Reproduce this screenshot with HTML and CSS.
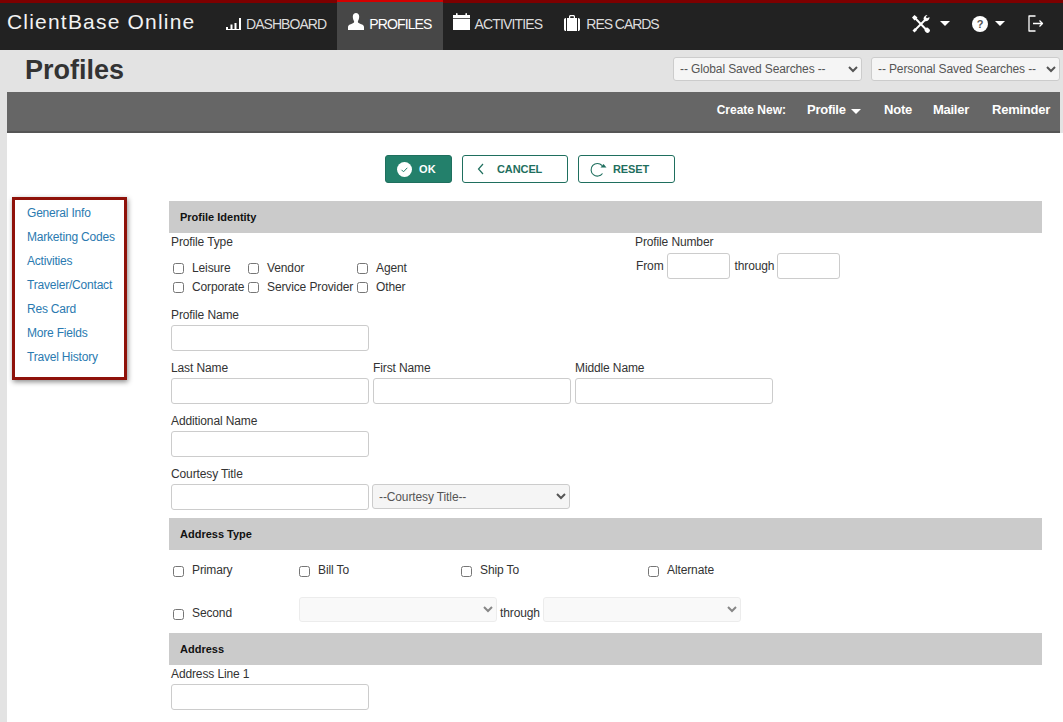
FILE: index.html

```html
<!DOCTYPE html>
<html lang="en">
<head>
  <meta charset="UTF-8" />
  <meta name="viewport" content="width=device-width, initial-scale=1.0"/>
  <title>ClientBase Online - Profiles</title>
  <link rel="stylesheet" href="styles.css">
</head>
<body>

<header class="topbar">
  <div class="brand">ClientBase Online</div>
  <nav class="mainnav">
    <a class="navlink nav-dash" href="#">
      <svg class="navicon" width="16" height="12" viewBox="0 0 16 12"><path fill="#fff" d="M0 9h2v3H0zM4.500 6.500h2V12h-2zM8.500 5h2v7h-2zM13 0h2v12h-2zM0 11h15v1H0z"/></svg>
      DASHBOARD
    </a>
    <a class="navlink nav-profiles active" href="#">
      <svg class="navicon tall" width="16" height="17" viewBox="0 0 16 17"><path fill="#fff" d="M4.800 3.500C4.800 1.300 6.200 0 8 0s3.200 1.300 3.200 3.500c0 2-.7 3.500-1.200 4.500-.3.600-.2 1.300.3 1.700 1 .8 2.600 1.300 3.900 1.900.9.400 1.800 1.400 1.800 2.600V17H0v-2.800c0-1.200.9-2.200 1.800-2.600 1.300-.6 2.900-1.100 3.900-1.900.5-.4.6-1.100.3-1.700-.5-1-1.200-2.500-1.200-4.500z"/></svg>
      PROFILES
    </a>
    <a class="navlink nav-act" href="#">
      <svg class="navicon tall" width="17" height="17" viewBox="0 0 17 17"><path fill="#fff" d="M0 2h3V.8C3 .3 3.300 0 3.800 0s.8.3.8.8V2h7.800V.8c0-.5.3-.8.8-.8s.8.3.8.8V2h3v3H0zM0 5.800h17V17H0z"/></svg>
      ACTIVITIES
    </a>
    <a class="navlink nav-res" href="#">
      <svg class="navicon mid" width="16" height="16" viewBox="0 0 16 16"><path fill="#fff" d="M5 3V1.500C5 .7 5.700 0 6.500 0h3c.8 0 1.500.7 1.500 1.500V3H9.800V1.700c0-.3-.2-.5-.5-.5H6.700c-.3 0-.5.2-.5.5V3zM3 3h10v13H3zM2 3v13h-.2C.8 16 0 15.200 0 14.200V4.800C0 3.800.8 3 1.800 3zM14 3h.2c1 0 1.800.8 1.800 1.800v9.400c0 1-.8 1.800-1.800 1.800H14z"/></svg>
      RES CARDS
    </a>
  </nav>
  <div class="toolnav">
    <svg class="tool-icon" width="18" height="18" viewBox="0 0 18 18"><path fill="none" stroke="#fff" stroke-width="2" d="M3 15L14 4"/><path fill="none" stroke="#fff" stroke-width="2" d="M3.500 3.500L15 15.500"/><path fill="#fff" d="M0 2.500L2.500 0l3 2.500-3 3zM11.500 4C11.500 1.800 13.300 0 15.500 0l-1.800 2 1.300 1.300L17.500 2c.2 2.500-1.700 4.500-4.500 4.200zM12.500 15c0-.8 1.500-2.500 2.500-2.500s3 2 3 3-1.500 2.500-2.500 2.500-3-2-3-3zM.5 15.500l2.500-2.500 2 2-2.500 2.500z"/></svg>
    <span class="caret tool-caret"></span>
    <span class="help-icon">?</span>
    <span class="caret help-caret"></span>
    <svg class="logout-icon" width="16" height="17" viewBox="0 0 16 17"><path fill="none" stroke="#fff" stroke-width="1.300" stroke-linejoin="round" d="M7.500 1H1v15h6.500M5 8.500h9.500M11.500 5.500l3 3-3 3"/></svg>
  </div>
</header>

<div class="subheader">
  <h1>Profiles</h1>
  <div class="saved">
    <select class="saved-global"><option>-- Global Saved Searches --</option></select>
    <select class="saved-personal"><option>-- Personal Saved Searches --</option></select>
  </div>
</div>

<div class="createbar">
  <span class="create-label">Create New:</span>
  <a href="#" class="create-profile">Profile <span class="caret small"></span></a>
  <a href="#" class="create-note">Note</a>
  <a href="#" class="create-mailer">Mailer</a>
  <a href="#">Reminder</a>
</div>

<div class="content">
  <div class="actions">
    <button class="btn btn-ok">
      <svg width="15" height="15" viewBox="0 0 15 15"><circle cx="7.500" cy="7.500" r="7.500" fill="#fff"/><path d="M4.500 7.800l2 2 3.800-4" fill="none" stroke="#23806b" stroke-width="1"/></svg>
      OK
    </button>
    <button class="btn btn-cancel">
      <svg width="8" height="12" viewBox="0 0 8 12"><path d="M6 1L1.500 6 6 11" fill="none" stroke="#1f6f5e" stroke-width="1.200"/></svg>
      CANCEL
    </button>
    <button class="btn btn-reset">
      <svg width="17" height="15" viewBox="0 0 17 15"><path d="M12.500 11.500A6.300 6.300 0 1 1 12 3.500" fill="none" stroke="#1f6f5e" stroke-width="1.100"/><path d="M10.500 5.500h6l-3-3.500z" fill="#1f6f5e"/></svg>
      RESET
    </button>
  </div>

  <div class="columns">
    <aside class="sidebox">
      <a href="#">General Info</a>
      <a href="#">Marketing Codes</a>
      <a href="#">Activities</a>
      <a href="#">Traveler/Contact</a>
      <a href="#">Res Card</a>
      <a href="#">More Fields</a>
      <a href="#">Travel History</a>
    </aside>

    <form class="search">
      <h3 class="section">Profile Identity</h3>

      <div class="identity">
        <div class="type-col">
          <div class="lbl">Profile Type</div>
          <div class="checks">
            <label><input type="checkbox"> Leisure</label>
            <label><input type="checkbox"> Vendor</label>
            <label><input type="checkbox"> Agent</label>
            <label><input type="checkbox"> Corporate</label>
            <label><input type="checkbox"> Service Provider</label>
            <label><input type="checkbox"> Other</label>
          </div>
        </div>
        <div class="number-col">
          <div class="lbl">Profile Number</div>
          <div class="range">
            <span>From</span><input type="text" class="short">
            <span>through</span><input type="text" class="short">
          </div>
        </div>
      </div>

      <div class="field first-name-row">
        <div class="lbl">Profile Name</div>
        <input type="text" class="wide">
      </div>

      <div class="name-row">
        <div class="field">
          <div class="lbl">Last Name</div>
          <input type="text" class="wide">
        </div>
        <div class="field">
          <div class="lbl">First Name</div>
          <input type="text" class="wide">
        </div>
        <div class="field">
          <div class="lbl">Middle Name</div>
          <input type="text" class="wide">
        </div>
      </div>

      <div class="field">
        <div class="lbl">Additional Name</div>
        <input type="text" class="wide">
      </div>

      <div class="field">
        <div class="lbl">Courtesy Title</div>
        <div class="title-row">
          <input type="text" class="wide">
          <select class="pick"><option>--Courtesy Title--</option></select>
        </div>
      </div>

      <h3 class="section section-address-type">Address Type</h3>

      <div class="address-types">
        <label class="c1"><input type="checkbox"> Primary</label>
        <label class="c2"><input type="checkbox"> Bill To</label>
        <label class="c3"><input type="checkbox"> Ship To</label>
        <label class="c4"><input type="checkbox"> Alternate</label>
      </div>
      <div class="second-row">
        <label class="c1"><input type="checkbox"> Second</label>
        <select class="pick" disabled><option></option></select>
        <span class="through">through</span>
        <select class="pick" disabled><option></option></select>
      </div>

      <h3 class="section">Address</h3>
      <div class="field address-field">
        <div class="lbl">Address Line 1</div>
        <input type="text" class="wide">
      </div>
    </form>
  </div>
</div>

</body>
</html>
```

FILE: styles.css

```css
* {
  box-sizing: border-box;
}
html, body {
  height: 722px;
  overflow: hidden;
}
body {
  margin: 0;
  font-family: "Liberation Sans", Arial, sans-serif;
  font-size: 12px;
  letter-spacing: -0.12px;
  color: #333;
  background: #e3e3e3;
}
a {
  text-decoration: none;
}

/* top bar */
.topbar {
  display: flex;
  align-items: stretch;
  height: 50px;
  background: #222;
  border-top: 3px solid #7d0000;
  color: #fff;
}
.brand {
  width: 212px;
  padding: 7px 0 0 7px;
  font-size: 21px;
  letter-spacing: 1.2px;
  color: #f2f2f2;
}
.mainnav {
  display: flex;
}
.navlink {
  display: flex;
  align-items: center;
  gap: 5px;
  height: 47px;
  padding: 0 11px 5px 11px;
  font-size: 14px;
  letter-spacing: -0.85px;
  color: #ddd;
}
.nav-dash {
  padding-left: 14px;
  gap: 4px;
  letter-spacing: -0.95px;
}
.nav-act {
  padding-left: 10px;
  padding-right: 22px;
}
.nav-res {
  padding-left: 0;
  gap: 6px;
  letter-spacing: -1.05px;
}
.navlink.active {
  margin-top: -3px;
  height: 50px;
  padding-top: 1px;
  background: #474747;
  border-top: 2px solid #d40000;
  color: #fff;
}
.navicon {
  flex: none;
}
.navicon.tall {
  margin-bottom: 6px;
}
.navicon.mid {
  margin-bottom: 2px;
}
.toolnav {
  display: flex;
  align-items: center;
  margin-left: auto;
  height: 41px;
  padding-right: 19px;
}
.caret {
  display: inline-block;
  width: 0;
  height: 0;
  border-left: 5.500px solid transparent;
  border-right: 5.500px solid transparent;
  border-top: 5.500px solid #fff;
}
.tool-caret {
  margin: 0 22px 0 10px;
}
.help-icon {
  width: 16px;
  height: 16px;
  border-radius: 50%;
  background: #fff;
  color: #555;
  font-size: 11px;
  font-weight: bold;
  line-height: 16px;
  text-align: center;
}
.help-caret {
  margin: 0 23px 0 7px;
}

/* title row */
.subheader {
  display: flex;
  justify-content: space-between;
  height: 42px;
  padding: 0 3px 0 25px;
}
h1 {
  margin: 0;
  padding-top: 4px;
  font-size: 27px;
  line-height: 32px;
  letter-spacing: 0;
  color: #333;
}
.saved {
  display: flex;
  gap: 9px;
  padding-top: 7px;
}
.saved select {
  height: 24px;
  padding-left: 2px;
  font-family: inherit;
  font-size: 12px;
  letter-spacing: -0.12px;
  color: #555;
  background: #f5f5f5;
  border: 1px solid #ccc;
  border-radius: 3px;
}
.saved-global {
  width: 189px;
}
.saved-personal {
  width: 189px;
}

.createbar {
  display: flex;
  justify-content: flex-end;
  align-items: center;
  height: 41px;
  margin: 0 3px 0 7px;
  padding: 0 10px 4px 0;
  background: #666;
  border-bottom: 2px solid #555;
  font-size: 13px;
  font-weight: bold;
  letter-spacing: -0.25px;
  color: #fff;
}
.createbar a {
  color: #fff;
}
.create-label {
  margin-right: 21px;
  font-size: 12px;
  letter-spacing: 0;
}
.create-profile {
  margin-right: 23px;
}
.create-note {
  margin-right: 21px;
}
.create-mailer {
  margin-right: 23px;
}
.caret.small {
  margin-left: 2px;
  vertical-align: 0;
}

/* body */
.content {
  height: 590px;
  margin-left: 7px;
  background: #fff;
}
.actions {
  display: flex;
  justify-content: flex-start;
  gap: 10px;
  height: 64px;
  padding: 22px 0 0 378px;
}
.btn {
  display: flex;
  align-items: center;
  height: 28px;
  padding: 0;
  border: 1px solid #1f6f5e;
  border-radius: 3px;
  background: #fff;
  font-family: "Liberation Sans", Arial, sans-serif;
  font-size: 11px;
  font-weight: bold;
  letter-spacing: -0.1px;
  color: #1f6f5e;
}
.btn-ok {
  width: 67px;
  gap: 7px;
  padding-left: 11px;
  background: #23806b;
  letter-spacing: 0.3px;
  color: #fff;
}
.btn-cancel {
  width: 106px;
  gap: 12px;
  padding-left: 14px;
}
.btn-reset {
  width: 97px;
  gap: 6px;
  padding-left: 11px;
}

.columns {
  display: flex;
  align-items: flex-start;
  padding-top: 4px;
}
.sidebox {
  display: flex;
  flex-direction: column;
  flex: none;
  width: 115px;
  height: 183px;
  margin: -4px 42px 0 5px;
  padding: 1px 0 0 12px;
  border: 3px solid #8f120a;
  box-shadow: 1px 2px 5px rgba(0,0,0,0.45);
}
.sidebox a {
  height: 24px;
  line-height: 24px;
  letter-spacing: -0.2px;
  color: #2a7ab0;
}

.search {
  width: 873px;
  padding-top: 0;
}
.section {
  height: 32px;
  margin: 0;
  padding-left: 11px;
  background: #cbcbcb;
  font-size: 11px;
  line-height: 32px;
  letter-spacing: 0;
  color: #111;
}
.lbl {
  height: 16px;
  line-height: 16px;
  padding-left: 2px;
}
.identity {
  display: flex;
  padding-top: 1px;
}
.type-col {
  width: 464px;
}
.checks {
  display: grid;
  grid-template-columns: 75px 109px 90px;
  padding: 8px 0 0 4px;
}
.checks label {
  display: flex;
  align-items: center;
  height: 19px;
}
input[type="checkbox"] {
  flex: none;
  width: 11px;
  height: 11px;
  margin: 2px 8px 0 0;
}
.range {
  display: flex;
  align-items: center;
  padding: 3px 0 0 3px;
}
.range span {
  margin-right: 3px;
}
.range input + span {
  margin-left: 5px;
}
input[type="text"] {
  height: 26px;
  border: 1px solid #ccc;
  border-radius: 3px;
  background: #fff;
}
.short {
  width: 63px;
}
.wide {
  width: 198px;
}
.field {
  padding-top: 7px;
  padding-bottom: 2px;
}
.field input {
  display: block;
  margin: 2px 0 0 2px;
}
.first-name-row {
  margin-top: 4px;
}
.name-row {
  display: flex;
  gap: 2px;
}
.title-row {
  display: flex;
  gap: 3px;
  align-items: flex-start;
}
.title-row select {
  margin-top: 2px;
}
.pick {
  width: 198px;
  height: 25px;
  padding-left: 2px;
  font-family: inherit;
  font-size: 12px;
  letter-spacing: -0.12px;
  color: #555;
  background: #f5f5f5;
  border: 1px solid #ccc;
  border-radius: 3px;
}
.pick:disabled {
  background: #f7f7f7;
  border-color: #e5e5e5;
}
.section-address-type {
  margin-top: 6px;
}
.address-types {
  display: flex;
  height: 41px;
  padding: 13px 0 0 4px;
}
.address-types label,
.second-row label {
  display: flex;
  align-items: flex-start;
}
.address-types input,
.second-row input {
  margin-top: 3px;
}
.c1 {
  width: 126px;
}
.c2 {
  width: 162px;
}
.c3 {
  width: 187px;
}
.second-row {
  display: flex;
  align-items: flex-start;
  height: 42px;
  padding: 6px 0 0 4px;
}
.second-row label {
  margin-top: 9px;
}
.through {
  margin-top: 9px;
  padding: 0 3px;
}
.address-field {
  padding-top: 1px;
}
.address-field input {
  margin-top: 2px;
}
```
